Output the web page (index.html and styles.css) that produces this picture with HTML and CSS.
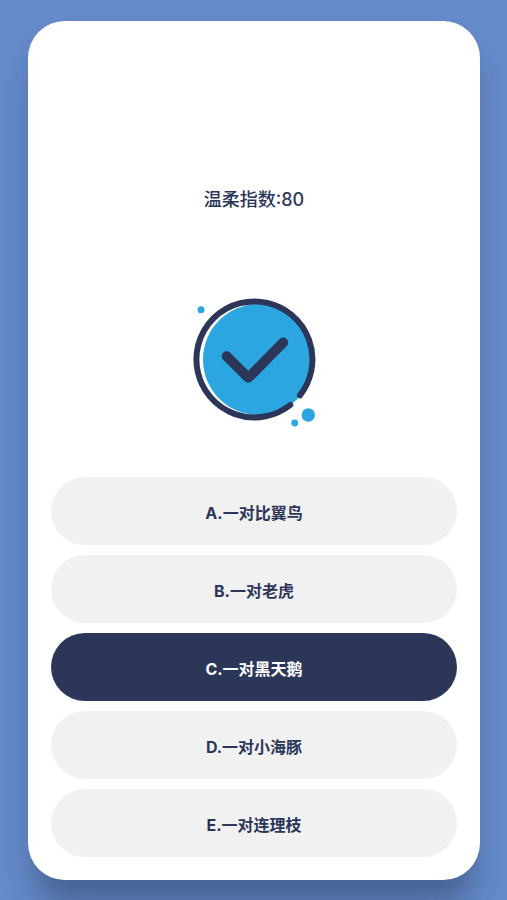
FILE: index.html
```html
<!DOCTYPE html>
<html lang="zh-CN">
<head>
<meta charset="utf-8">
<meta name="viewport" content="width=device-width, initial-scale=1">
<title>温柔指数</title>
<link rel="stylesheet" href="styles.css">
</head>
<body>
<main class="card">
  <h1 class="title">温柔指数:80</h1>
  <svg class="badge" viewBox="-1 0 150 150" aria-hidden="true">
    <circle class="blue" cx="78.5" cy="74.5" r="55.5"/>
    <path class="ring" d="M110.3 120A58 58 0 1 1 120 110.3"/>
    <path class="check" d="M46.7 71.2 68.3 92.8 103.2 57.6"/>
    <circle class="blue" cx="21" cy="24.7" r="3.5"/>
    <circle class="blue" cx="128.3" cy="130" r="6.7"/>
    <circle class="blue" cx="114.7" cy="138" r="3.4"/>
  </svg>
  <div class="options">
    <button class="option" type="button">A.一对比翼鸟</button>
    <button class="option" type="button">B.一对老虎</button>
    <button class="option selected" type="button">C.一对黑天鹅</button>
    <button class="option" type="button">D.一对小海豚</button>
    <button class="option" type="button">E.一对连理枝</button>
  </div>
</main>
</body>
</html>
```
FILE: styles.css
```css
* {
  box-sizing: border-box;
}

body {
  display: flex;
  min-height: 100vh;
  margin: 0;
  padding: 21px 27px 20px 28px;
  background: #658bca;
  color: #2c3659;
  font-family: Inter, "Noto Sans CJK SC", sans-serif;
}

.card {
  display: flex;
  flex: 1;
  flex-direction: column;
  align-items: center;
  padding: 165px 23px 23px;
  border-radius: 37px;
  background: #fff;
  box-shadow:
    0 24px 32px rgba(45, 60, 100, 0.15),
    0 32px 28px -10px rgba(45, 60, 90, 0.4);
}

.title {
  margin: 0;
  font-size: 18px;
  font-weight: 500;
  line-height: 28px;
}

.badge {
  width: 150px;
  height: 150px;
  margin-top: 71px;
}

.blue {
  fill: #2ba6e0;
}

.ring,
.check {
  fill: none;
  stroke: #2c3659;
  stroke-linecap: round;
  stroke-linejoin: round;
}

.ring {
  stroke-width: 6px;
}

.check {
  stroke-width: 10px;
}

.options {
  display: grid;
  gap: 10px;
  width: 100%;
  margin-top: auto;
}

.option {
  height: 68px;
  padding: 4px 8px 0;
  border: 0;
  border-radius: 34px;
  background: #f1f1f1;
  color: inherit;
  font: bold 16px/24px Inter, "Noto Sans CJK SC", sans-serif;
  cursor: pointer;
}

.selected {
  background: #2c3659;
  color: #fff;
}
```
